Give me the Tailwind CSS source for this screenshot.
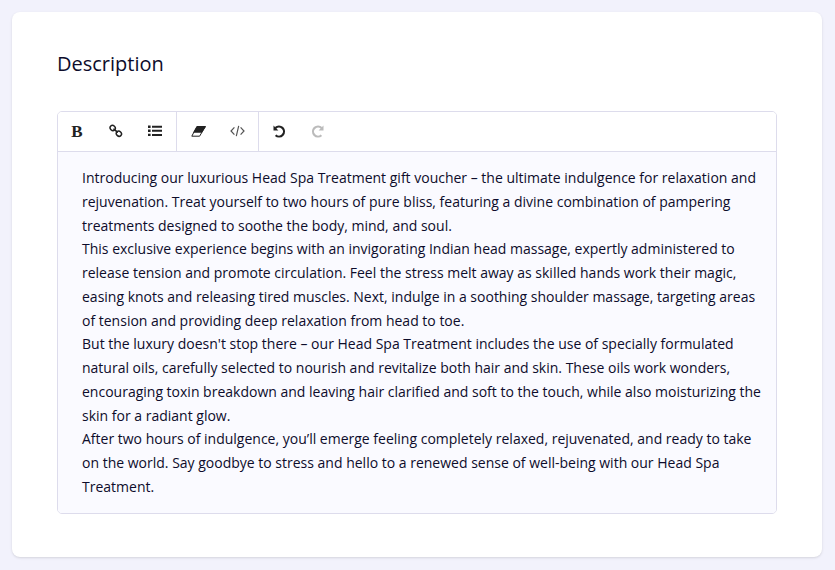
<!DOCTYPE html>
<html lang="en">
<head>
  <meta charset="utf-8">
  <meta name="viewport" content="width=device-width, initial-scale=1">
  <title>Description</title>
  <script src="https://cdn.jsdelivr.net/npm/@tailwindcss/browser@4"></script>
</head>
<body class="bg-[#f2f2fc] p-3 font-['Open_Sans',sans-serif] text-[#0d0c2b]">
  <section class="mr-px rounded-lg bg-white px-[45px] pt-[38px] pb-[43px] shadow-sm">
    <h2 id="description-label" class="text-xl leading-7">Description</h2>

    <div class="mt-[33px] overflow-hidden rounded-[5px] border border-[#dddcec]">
      <!-- toolbar -->
      <div class="flex h-10 border-b border-[#dddcec] bg-white text-[#222]" role="toolbar" aria-label="Formatting">
        <div class="flex border-r border-[#dddcec] pr-0.5 pb-px">
          <button type="button" aria-label="Bold" class="flex w-[38px] items-center justify-center font-['Liberation_Serif',serif] text-[17px] leading-none font-bold">B</button>
          <button type="button" aria-label="Link" class="flex w-[39px] items-center justify-center">
            <svg class="size-[14px]" viewBox="0 0 14 14" fill="none" stroke="currentColor" stroke-width="1.5" stroke-linecap="round">
              <ellipse cx="3.7" cy="4" rx="2.4" ry="2.7" transform="rotate(-45 3.7 4)"/>
              <ellipse cx="9.9" cy="9.7" rx="2.4" ry="2.7" transform="rotate(-45 9.9 9.7)"/>
              <path d="M4.8 5.2l2.4 1.6M6.2 6.2l2 2"/>
            </svg>
          </button>
          <button type="button" aria-label="List" class="flex w-[39px] items-center justify-center">
            <svg class="h-3 w-[14px]" viewBox="0 0 14 12" fill="currentColor">
              <path d="M0 .5h2.6v2.4H0zM0 4.6h2.6V7H0zM0 8.7h2.6v2.4H0z"/>
              <path d="M4 .7h10v2H4zM4 4.8h10v2H4zM4 8.9h10v2H4z"/>
            </svg>
          </button>
        </div>
        <div class="flex border-r border-[#dddcec] pr-px pb-px pl-0.5">
          <button type="button" aria-label="Clear formatting" class="flex w-[39px] items-center justify-center">
            <svg class="h-[11px] w-[15px]" viewBox="0 0 15 11">
              <path d="M5.9.5h8.4L8.6 10.2H.8z" fill="#fff" stroke="currentColor" stroke-linejoin="round"/>
              <path d="M5.9.3h8.6a.4.4 0 0 1 .4.5l-4 6H2z" fill="currentColor"/>
            </svg>
          </button>
          <button type="button" aria-label="Source code" class="flex w-[39px] items-center justify-center text-[#555]">
            <svg class="h-3 w-[15px]" viewBox="0 0 15 12" fill="none" stroke="currentColor" stroke-width="1.2">
              <path d="M4.4 2.4L1 6l3.4 3.6M10.6 2.4L14 6l-3.4 3.6M8.7 .8L6.3 11.2"/>
            </svg>
          </button>
        </div>
        <div class="flex pb-px pl-px">
          <button type="button" aria-label="Undo" class="flex w-[39px] items-center justify-center">
            <svg class="size-[13px]" viewBox="0 0 13 13">
              <path d="M2.4 3A5 5 0 1 1 2.6 10.2" fill="none" stroke="currentColor" stroke-width="2.2"/>
              <path d="M.5.6v4.9h4.9z" fill="currentColor"/>
            </svg>
          </button>
          <button type="button" aria-label="Redo" disabled class="flex w-[37px] items-center justify-center text-[#bbb]">
            <svg class="size-[13px]" viewBox="0 0 13 13">
              <path d="M10.6 3A5 5 0 1 0 10.4 10.2" fill="none" stroke="currentColor" stroke-width="2.2"/>
              <path d="M12.5.6v4.9H7.6z" fill="currentColor"/>
            </svg>
          </button>
        </div>
      </div>

      <!-- editable text -->
      <div class="-space-y-px bg-[#fafaff] pt-[14px] pr-1 pb-[14px] pl-6 text-sm leading-6 outline-none" contenteditable="true" role="textbox" aria-multiline="true" aria-labelledby="description-label" spellcheck="false">
        <p>
          Introducing our luxurious Head Spa Treatment gift voucher – the ultimate indulgence for relaxation and<br>
          rejuvenation. Treat yourself to two hours of pure bliss, featuring a divine combination of pampering<br>
          treatments designed to soothe the body, mind, and soul.
        </p>
        <p>
          This exclusive experience begins with an invigorating Indian head massage, expertly administered to<br>
          release tension and promote circulation. Feel the stress melt away as skilled hands work their magic,<br>
          easing knots and releasing tired muscles. Next, indulge in a soothing shoulder massage, targeting areas<br>
          of tension and providing deep relaxation from head to toe.
        </p>
        <p>
          But the luxury doesn't stop there – our Head Spa Treatment includes the use of specially formulated<br>
          natural oils, carefully selected to nourish and revitalize both hair and skin. These oils work wonders,<br>
          encouraging toxin breakdown and leaving hair clarified and soft to the touch, while also moisturizing the<br>
          skin for a radiant glow.
        </p>
        <p>
          After two hours of indulgence, you’ll emerge feeling completely relaxed, rejuvenated, and ready to take<br>
          on the world. Say goodbye to stress and hello to a renewed sense of well-being with our Head Spa<br>
          Treatment.
        </p>
      </div>
    </div>
  </section>
</body>
</html>
